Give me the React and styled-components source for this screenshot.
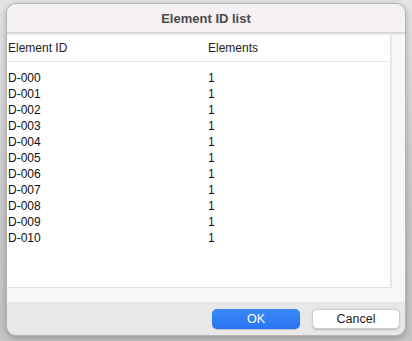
import styled, { createGlobalStyle } from "styled-components";

const rows = Array.from({ length: 11 }, (_, i) => ({
  id: "D-" + String(i).padStart(3, "0"),
  count: 1,
}));

const GlobalStyle = createGlobalStyle`
  html, body {
    margin: 0;
    padding: 0;
    background: #cdcdcd;
    font-family: "Liberation Sans", Arial, sans-serif;
  }
`;

const Backdrop = styled.div`
  width: 412px;
  height: 341px;
  padding: 3px 6px 0 6px;
  box-sizing: border-box;
  background: linear-gradient(to bottom, #e4e4e4, #c9c9c9 60%, #c4c4c4);
`;

const Window = styled.div`
  width: 400px;
  height: 333px;
  box-sizing: border-box;
  border: 1px solid #b4b4b4;
  border-radius: 10px;
  overflow: hidden;
  display: flex;
  flex-direction: column;
  background: #e8e8e8;
  box-shadow: 0 2px 6px rgba(0, 0, 0, 0.25);
`;

const TitleBar = styled.div`
  height: 28px;
  flex: none;
  display: flex;
  align-items: center;
  justify-content: center;
  background: #f4f0f3;
  border-bottom: 1px solid #cfcfcf;
  font-size: 13px;
  font-weight: bold;
  color: #4b4b4b;
`;

const Body = styled.div`
  flex: 1;
  display: flex;
  flex-direction: column;
  padding-top: 2px;
`;

const ScrollArea = styled.div`
  display: grid;
  grid-template-columns: 1fr 14px;
  grid-template-rows: 253px 14px;
  background: #f6f6f6;
`;

const List = styled.div`
  background: #ffffff;
  border-right: 1px solid #e2e2e2;
  border-bottom: 1px solid #e2e2e2;
  font-size: 12px;
  color: #111111;
`;

const Header = styled.div`
  display: grid;
  grid-template-columns: 200px 1fr;
  height: 26px;
  align-items: center;
  padding: 0 1px;
  border-bottom: 1px solid #e6e6e6;
  color: #222222;
`;

const Rows = styled.div`
  padding-top: 8px;
`;

const Row = styled.div`
  display: grid;
  grid-template-columns: 200px 1fr;
  height: 16px;
  align-items: center;
  padding: 0 1px;
`;

const Track = styled.div`
  background: #f7f7f7;
  border-left: ${(p) => (p.vertical ? "1px solid #ececec" : "none")};
`;

const Footer = styled.div`
  flex: 1;
  display: flex;
  justify-content: flex-end;
  align-items: flex-start;
  gap: 12px;
  padding: 7px 5px 0 0;
`;

const Button = styled.button`
  width: 88px;
  height: 20px;
  border-radius: 5px;
  font-family: "Liberation Sans", Arial, sans-serif;
  font-size: 12.5px;
  padding: 0;
  border: ${(p) => (p.primary ? "none" : "0.5px solid #cfcfcf")};
  color: ${(p) => (p.primary ? "#ffffff" : "#222222")};
  background: ${(p) =>
    p.primary ? "linear-gradient(to bottom, #3a88f8, #2a74f3)" : "#ffffff"};
  box-shadow: ${(p) =>
    p.primary ? "0 0.5px 1px rgba(0,0,0,0.2)" : "0 0.5px 1.5px rgba(0,0,0,0.2)"};
`;

export default function App() {
  return (
    <>
      <GlobalStyle />
      <Backdrop>
        <Window>
          <TitleBar>Element ID list</TitleBar>
          <Body>
            <ScrollArea>
              <List>
                <Header>
                  <span>Element ID</span>
                  <span>Elements</span>
                </Header>
                <Rows>
                  {rows.map((r) => (
                    <Row key={r.id}>
                      <span>{r.id}</span>
                      <span>{r.count}</span>
                    </Row>
                  ))}
                </Rows>
              </List>
              <Track vertical />
              <Track />
              <Track />
            </ScrollArea>
            <Footer>
              <Button primary>OK</Button>
              <Button>Cancel</Button>
            </Footer>
          </Body>
        </Window>
      </Backdrop>
    </>
  );
}
